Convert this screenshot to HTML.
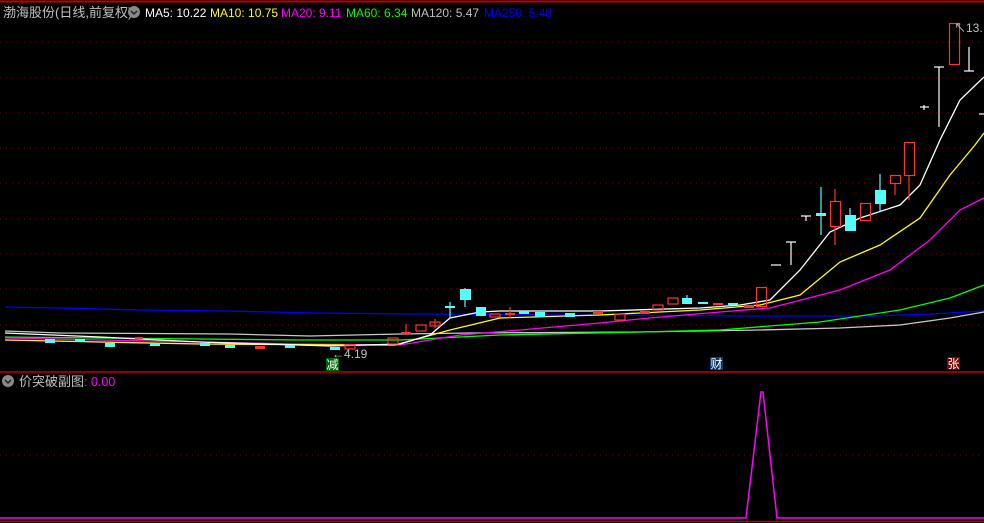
<!DOCTYPE html>
<html><head><meta charset="utf-8"><style>
html,body{margin:0;padding:0;background:#000;width:984px;height:523px;overflow:hidden}
svg{display:block}
text{font-family:"Liberation Sans","Noto Sans CJK SC",sans-serif}
</style></head><body>
<svg width="984" height="523" xmlns="http://www.w3.org/2000/svg">
<rect width="984" height="523" fill="#000"/>
<line x1="0" y1="1.5" x2="984" y2="1.5" stroke="#c00000" stroke-width="2"/>
<line x1="22" y1="0" x2="22" y2="4" stroke="#c00000"/>
<g stroke="#8b0000" stroke-dasharray="1,5">
<line x1="0" y1="42" x2="984" y2="42"/><line x1="0" y1="78" x2="984" y2="78"/>
<line x1="0" y1="113" x2="984" y2="113"/><line x1="0" y1="148" x2="984" y2="148"/>
<line x1="0" y1="183" x2="984" y2="183"/><line x1="0" y1="219" x2="984" y2="219"/>
<line x1="0" y1="254" x2="984" y2="254"/><line x1="0" y1="289" x2="984" y2="289"/>
<line x1="0" y1="325" x2="984" y2="325"/><line x1="0" y1="455" x2="984" y2="455"/>
</g>
<line x1="0" y1="372" x2="984" y2="372" stroke="#c00000" stroke-width="1.5"/>
<line x1="0" y1="521.5" x2="984" y2="521.5" stroke="#c00000" stroke-width="1.5"/>
<g fill="none" stroke-width="1.3">
<polyline stroke="#0000ff" points="5,307 60,308 140,310 225,311 315,313 420,314 600,315 760,316 870,316 930,314 984,311"/>
<polyline stroke="#c8c8c8" points="5,331 60,333 230,334 310,336 400,334 470,333 640,332 760,330 840,328 900,325 950,318 984,312"/>
<polyline stroke="#00ff00" points="5,337 100,338 200,339 300,340 400,340 500,335 640,332 720,330 820,322 900,310 950,298 984,285"/>
<polyline stroke="#ff00ff" points="5,338 100,340 200,342 300,344 400,345 460,335 520,330 600,323 650,318 720,312 770,308 840,290 890,270 930,240 960,210 984,198"/>
<polyline stroke="#ffff00" points="5,340 100,342 200,344 350,345 395,345 450,330 500,318 600,315 700,310 760,305 800,295 840,262 880,245 920,218 950,175 975,145 984,133"/>
<polyline stroke="#ffffff" points="5,333 100,337 200,342 330,346 400,344 430,335 450,318 480,312 500,311 600,311 700,308 740,305 770,300 800,270 830,232 860,218 900,205 920,185 940,140 960,100 984,77"/>
</g>
<g stroke-width="1.2">
<rect x="45" y="339" width="10" height="4" fill="#54fcfc"/>
<rect x="75" y="339" width="10" height="3" fill="#54fcfc"/>
<rect x="105" y="343" width="10" height="4" fill="#54fcfc"/>
<rect x="135" y="337" width="8" height="2" fill="#ff3232"/>
<rect x="150" y="343" width="10" height="3" fill="#54fcfc"/>
<rect x="200" y="343" width="10" height="3" fill="#54fcfc"/>
<rect x="225" y="345" width="10" height="3" fill="#54fcfc"/>
<rect x="255" y="346" width="10" height="3" fill="#ff3232"/>
<rect x="285" y="345" width="10" height="3" fill="#54fcfc"/>
<rect x="330" y="347" width="10" height="3" fill="#54fcfc"/>
<rect x="345" y="345" width="10" height="4" fill="none" stroke="#ff3232"/>
<rect x="388" y="338" width="10" height="6" fill="none" stroke="#ff3232"/>
<line x1="406" y1="324" x2="406" y2="335" stroke="#ff3232"/><rect x="401" y="332" width="10" height="2" fill="#ff3232"/>
<rect x="416" y="325" width="10" height="6" fill="none" stroke="#ff3232"/>
<line x1="435" y1="319" x2="435" y2="328" stroke="#ff3232"/><rect x="430" y="322" width="10" height="4" fill="none" stroke="#ff3232"/>
<line x1="450" y1="302" x2="450" y2="318" stroke="#54fcfc"/><rect x="445" y="306" width="10" height="2" fill="#54fcfc"/>
<line x1="465" y1="288" x2="465" y2="307" stroke="#54fcfc"/><rect x="460" y="289" width="11" height="11" fill="#54fcfc"/>
<rect x="476" y="307" width="10" height="9" fill="#54fcfc"/>
<rect x="490" y="314" width="10" height="3" fill="none" stroke="#ff3232"/>
<line x1="510" y1="307" x2="510" y2="318" stroke="#ff3232"/><rect x="505" y="313" width="10" height="2" fill="#ff3232"/>
<rect x="519" y="311" width="10" height="3" fill="#54fcfc"/>
<rect x="535" y="312" width="10" height="5" fill="#54fcfc"/>
<rect x="565" y="313" width="10" height="4" fill="#54fcfc"/>
<rect x="593" y="311" width="10" height="3" fill="#ff3232"/>
<rect x="615" y="314" width="10" height="6" fill="none" stroke="#ff3232"/>
<rect x="640" y="311" width="10" height="3" fill="#ff3232"/>
<rect x="653" y="305" width="10" height="5" fill="none" stroke="#ff3232"/>
<rect x="668" y="298" width="10" height="6" fill="none" stroke="#ff3232"/>
<line x1="687" y1="295" x2="687" y2="304" stroke="#54fcfc"/><rect x="682" y="298" width="10" height="6" fill="#54fcfc"/>
<rect x="698" y="302" width="10" height="2" fill="#54fcfc"/>
<rect x="713" y="303" width="10" height="2" fill="#ff3232"/>
<rect x="728" y="303" width="10" height="2" fill="#54fcfc"/>
<rect x="744" y="305" width="10" height="3" fill="#ff3232"/>
<rect x="756.5" y="287.5" width="10" height="19" fill="none" stroke="#ff3232"/>
<line x1="771" y1="265" x2="781" y2="265" stroke="#fff"/>
<line x1="791" y1="242" x2="791" y2="265" stroke="#fff"/><line x1="786" y1="242" x2="796" y2="242" stroke="#fff"/>
<line x1="806" y1="216" x2="806" y2="221" stroke="#fff"/><line x1="801" y1="216" x2="811" y2="216" stroke="#fff"/>
<line x1="821" y1="187" x2="821" y2="235" stroke="#54fcfc"/><rect x="816" y="213" width="10" height="3" fill="#54fcfc"/>
<line x1="835" y1="189" x2="835" y2="245" stroke="#ff3232"/><rect x="830.5" y="201.5" width="10" height="25" fill="#000" stroke="#ff3232"/>
<line x1="850" y1="208" x2="850" y2="231" stroke="#54fcfc"/><rect x="845" y="215" width="11" height="16" fill="#54fcfc"/>
<rect x="860.5" y="203.5" width="10" height="17" fill="none" stroke="#ff3232"/>
<line x1="880" y1="174" x2="880" y2="211" stroke="#54fcfc"/><rect x="875" y="190" width="11" height="14" fill="#54fcfc"/>
<line x1="895" y1="183" x2="895" y2="195" stroke="#ff3232"/><rect x="890.5" y="175.5" width="10" height="8" fill="none" stroke="#ff3232"/>
<line x1="909" y1="175" x2="909" y2="200" stroke="#ff3232"/><rect x="904.5" y="142.5" width="10" height="33" fill="none" stroke="#ff3232"/>
<line x1="920" y1="107" x2="929" y2="107" stroke="#fff"/><line x1="924" y1="105" x2="924" y2="110" stroke="#fff"/>
<line x1="939" y1="67" x2="939" y2="127" stroke="#fff"/><line x1="934" y1="67" x2="944" y2="67" stroke="#fff"/>
<rect x="949.5" y="23.5" width="10" height="41" fill="none" stroke="#ff3232"/>
<line x1="969" y1="47" x2="969" y2="71" stroke="#fff"/><line x1="964" y1="71" x2="974" y2="71" stroke="#fff"/>
<line x1="979" y1="114" x2="984" y2="114" stroke="#fff"/>
</g>
<text x="954" y="32" fill="#c0c0c0" font-size="12">↖13.</text>
<text x="332" y="358" fill="#c0c0c0" font-size="12">←4.19</text>
<rect x="326" y="358" width="13" height="13" fill="#006400"/><text x="326.5" y="369" fill="#fff" font-size="12">减</text>
<rect x="710" y="357" width="13" height="13" fill="#0a3a6a"/><text x="710.5" y="368" fill="#fff" font-size="12">财</text>
<rect x="947" y="357" width="13" height="13" fill="#800000"/><text x="947.5" y="368" fill="#fff" font-size="12">张</text>
<text x="3" y="17" font-size="13" fill="#c0c0c0">渤海股份(日线,前复权)</text>
<circle cx="134" cy="12" r="6" fill="#888"/><path d="M131,11 L134,14 L137,11" stroke="#222" stroke-width="1.5" fill="none"/>
<g font-size="12">
<text x="145" y="17" fill="#fff">MA5: 10.22</text>
<text x="210" y="17" fill="#ffff00">MA10: 10.75</text>
<text x="281" y="17" fill="#ff00ff">MA20: 9.11</text>
<text x="346" y="17" fill="#00ff00">MA60: 6.34</text>
<text x="411" y="17" fill="#c0c0c0">MA120: 5.47</text>
<text x="484" y="17" fill="#0000ff">MA250: 5.48</text>
</g>
<circle cx="8" cy="381" r="6" fill="#888"/><path d="M5,380 L8,383 L11,380" stroke="#222" stroke-width="1.5" fill="none"/>
<text x="19" y="386" font-size="13" fill="#c0c0c0">价突破副图</text>
<text x="84" y="386" font-size="12.5" fill="#ff00ff">: 0.00</text>
<polyline fill="none" stroke="#ff00ff" stroke-width="1.5" points="0,518 746,518 761,392 763,392 777,518 984,518"/>
</svg>
</body></html>
